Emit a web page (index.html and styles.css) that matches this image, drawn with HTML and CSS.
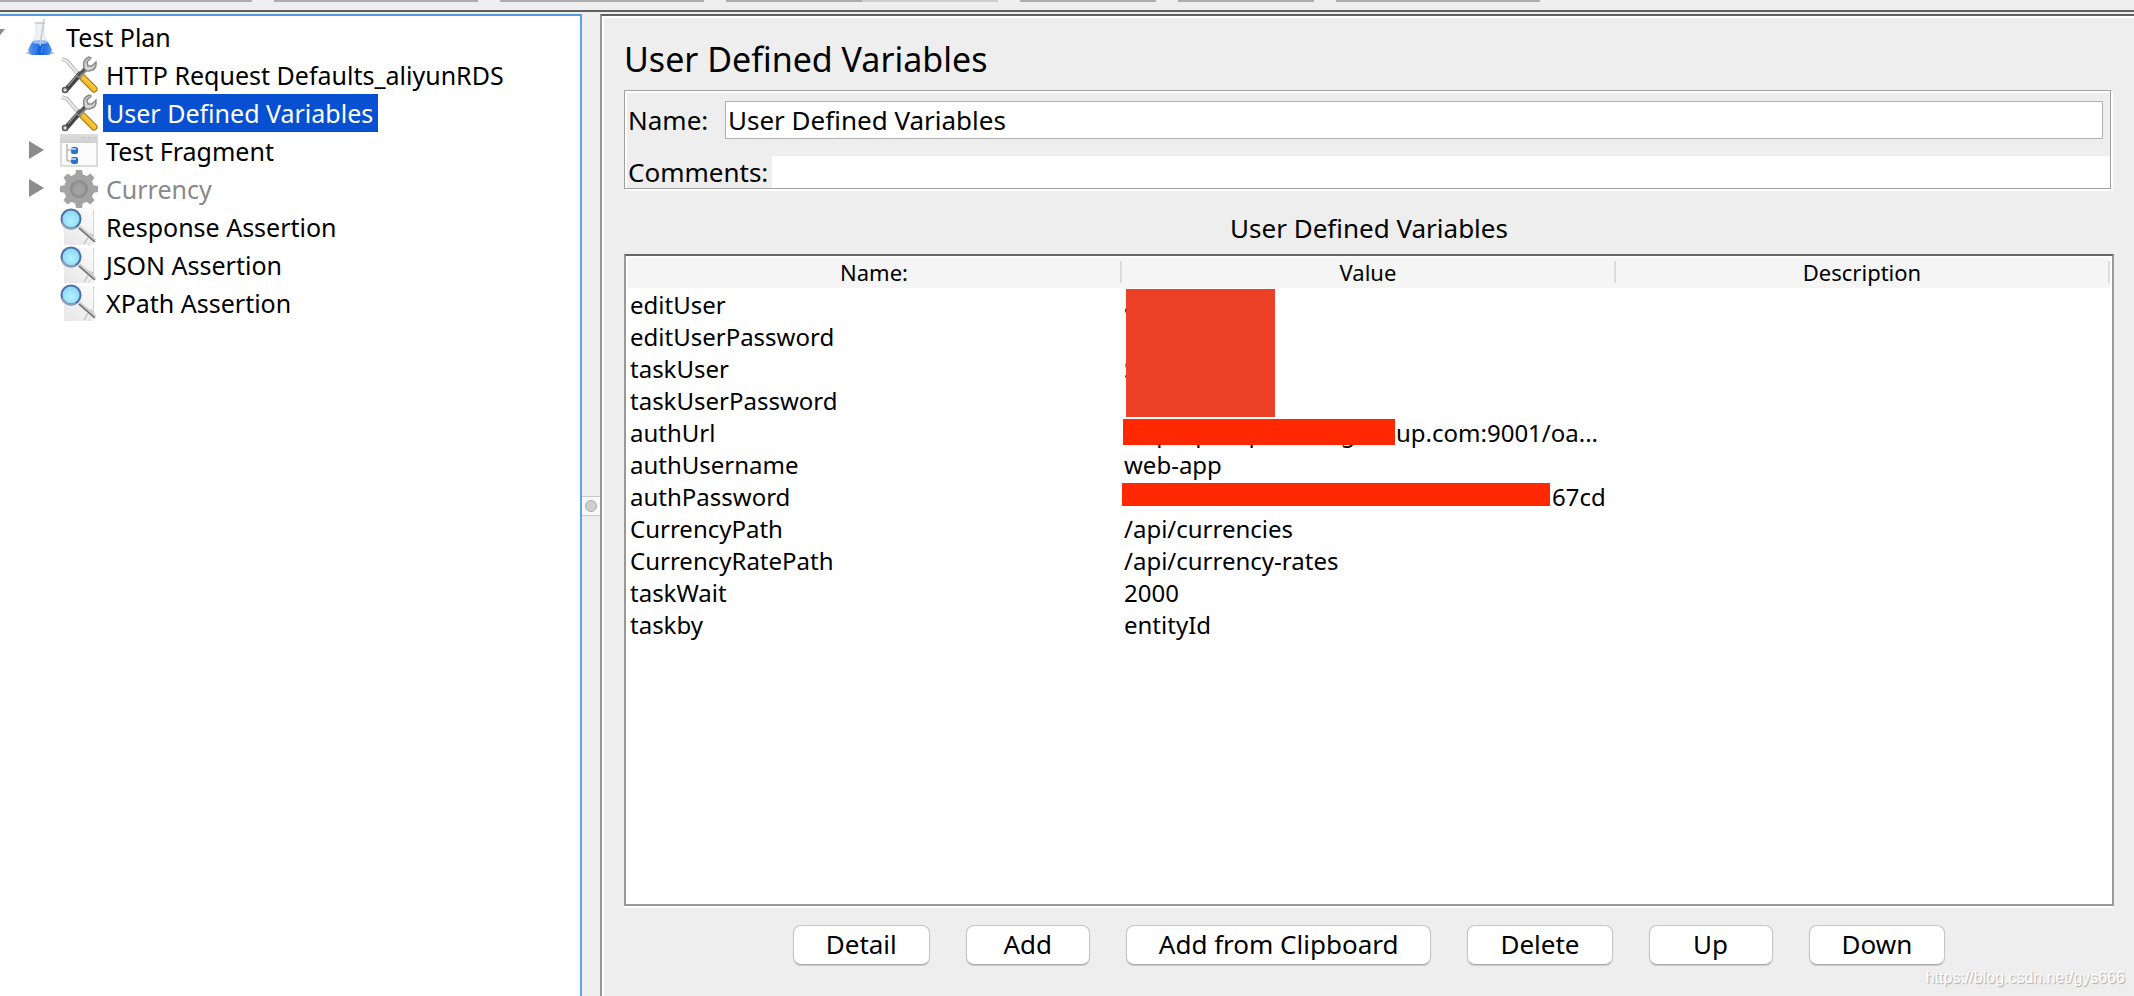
FILE: index.html
```html
<!DOCTYPE html>
<html lang="en">
<head>
<meta charset="utf-8">
<title>User Defined Variables</title>
<link rel="stylesheet" href="styles.css">
</head>
<body>
<svg class="defs" aria-hidden="true">
  <defs>
    <linearGradient id="gold" x1="0" y1="1" x2="1" y2="0"><stop offset="0" stop-color="#d99a12"/><stop offset=".6" stop-color="#fbc93c"/><stop offset="1" stop-color="#d08f10"/></linearGradient>
    <linearGradient id="paper" x1="0" y1="1" x2="1" y2="0"><stop offset="0" stop-color="#e6e6e6"/><stop offset="1" stop-color="#fcfcfc"/></linearGradient>
    <radialGradient id="lens" cx=".5" cy=".6" r=".6"><stop offset="0" stop-color="#b5f2fd"/><stop offset="1" stop-color="#86d3f3"/></radialGradient>
    <linearGradient id="liquid" x1="0" y1="0" x2="1" y2="0"><stop offset="0" stop-color="#5b9df0"/><stop offset=".5" stop-color="#0f5fdc"/><stop offset="1" stop-color="#4a90ee"/></linearGradient>
    <linearGradient id="bar" x1="0" y1="0" x2="0" y2="1"><stop offset="0" stop-color="#dedede"/><stop offset="1" stop-color="#cfcfcf"/></linearGradient>
    <symbol id="flask" viewBox="0 0 28 38">
      <ellipse cx="14" cy="35" rx="14" ry="2" fill="#b9b9b9"/>
      <path d="M10 5 L10 17 L3 31 Q1 36 6 36 L22 36 Q27 36 25 31 L18 17 L18 5 Z" fill="#f0f1f4" stroke="#dfe3e8"/>
      <path d="M6 24 L22 24 L25.500 31 Q26 36 22 37 L6 37 Q2 36 2.500 31 Z" fill="url(#liquid)"/>
      <ellipse cx="14" cy="24" rx="8" ry="2" fill="#8dbcf5"/>
      <path d="M18 1 L14 28" stroke="#c3c7cc" stroke-width="1.500"/>
      <path d="M9 5 H19" stroke="#c4c8ce" stroke-width="1.500"/>
      <path d="M11 28 L8 35 M17 28 L15 35" stroke="#4487e6" stroke-width="1.500"/>
    </symbol>
    <symbol id="tools" viewBox="0 0 38 38">
      <path d="M2 3 L7 5 L19 19" fill="none" stroke="#b4b4b4" stroke-width="4"/>
      <path d="M2 3 L7 5 L19 19" fill="none" stroke="#ededed" stroke-width="2"/>
      <path d="M22 21 L34 33" stroke="#a5700c" stroke-width="7" stroke-linecap="round"/>
      <path d="M22 21 L34 33" stroke="url(#gold)" stroke-width="5" stroke-linecap="round"/>
      <path d="M20 18 L6 34" stroke="#444" stroke-width="5" stroke-linecap="round"/>
      <path d="M18 18 L8 30" stroke="#8b8b8b" stroke-width="1.500"/>
      <circle cx="5" cy="34" r="2.500" fill="#ddd" stroke="#555" stroke-width="1.500"/>
      <path d="M17 20 L24 12 Q22 4 29 1 L31 2 L27 6 L28 10 L32 10 L36 6 Q37 14 29 15 L26 15 L20 22 Z" fill="#d5d5d5" stroke="#888" stroke-width="1.500"/>
      <path d="M18 20 L25 13" stroke="#555" stroke-width="3"/>
    </symbol>
    <symbol id="fragment" viewBox="0 0 38 38">
      <rect x="1" y="3" width="36" height="31" fill="#fbfbfb" stroke="#dcdcdc" stroke-width="2"/>
      <rect x="0" y="2" width="38" height="9" fill="url(#bar)"/>
      <path d="M22 6 H25 M28 6 H31 M34 6 H36" stroke="#bfbfbf"/>
      <path d="M7 12 V29 H12 M7 18 H12" fill="none" stroke="#999"/>
      <rect x="11" y="15" width="7" height="7" rx="2" fill="#2873d0"/><path d="M11 17 H16" stroke="#9dc7f1" stroke-width="2"/>
      <rect x="11" y="25" width="7" height="7" rx="2" fill="#2873d0"/><path d="M11 27 H16" stroke="#9dc7f1" stroke-width="2"/>
    </symbol>
    <symbol id="gear" viewBox="0 0 38 38">
      <g fill="#a3a3a3">
        <circle cx="19" cy="19" r="15"/>
        <path id="tooth" d="M15 6 L16 0 H22 L23 6 Z M15 32 L16 38 H22 L23 32 Z"/>
        <use href="#tooth" transform="rotate(45 19 19)"/>
        <use href="#tooth" transform="rotate(90 19 19)"/>
        <use href="#tooth" transform="rotate(135 19 19)"/>
      </g>
      <circle cx="19" cy="19" r="8" fill="#999" stroke="#8c8c8c" stroke-width="2"/>
      <circle cx="19" cy="20" r="5" fill="#a2a2a2"/>
    </symbol>
    <symbol id="magnifier" viewBox="0 0 38 38">
      <rect x="4" y="2" width="30" height="35" fill="url(#paper)"/>
      <path d="M33.500 2 V30 L28 37" fill="none" stroke="#d5d5d5"/>
      <path d="M24 36 L30 26 L34 28" fill="none" stroke="#ccc" stroke-width="2"/>
      <path d="M19 19 L35 33" stroke="#cfcfcf" stroke-width="4"/>
      <path d="M19 20 L35 34" stroke="#6c6c6c" stroke-width="1.500"/>
      <circle cx="11" cy="11" r="9.500" fill="url(#lens)" stroke="#4a6fa5" stroke-width="2"/>
      <path d="M2 14 A9.500 9.500 0 0 0 16 19" fill="none" stroke="#8fa0b5" stroke-width="2"/>
    </symbol>
  </defs>
</svg>

<div class="app">
  <div class="toolbar">
    <i class="seg seg-first"></i><i class="seg seg-wide"></i><i class="seg seg-wide"></i><i class="seg seg-progress"></i><i class="seg"></i><i class="seg"></i><i class="seg seg-wide"></i>
  </div>
  <div class="workspace">
    <nav class="tree" aria-label="Test Plan">
      <ul>
        <li>
          <div class="node root"><svg class="arrow-open" viewBox="0 0 16 10"><path d="M0 0H16L8 10Z"/></svg><svg class="icon flask"><use href="#flask"/></svg><span class="label">Test Plan</span></div>
          <ul>
            <li class="node"><svg class="icon"><use href="#tools"/></svg><span class="label">HTTP Request Defaults_aliyunRDS</span></li>
            <li class="node"><svg class="icon"><use href="#tools"/></svg><span class="label selected">User Defined Variables</span></li>
            <li class="node"><svg class="arrow" viewBox="0 0 15 18"><path d="M0 0L15 9L0 18Z"/></svg><svg class="icon"><use href="#fragment"/></svg><span class="label">Test Fragment</span></li>
            <li class="node"><svg class="arrow" viewBox="0 0 15 18"><path d="M0 0L15 9L0 18Z"/></svg><svg class="icon"><use href="#gear"/></svg><span class="label disabled">Currency</span></li>
            <li class="node"><svg class="icon"><use href="#magnifier"/></svg><span class="label">Response Assertion</span></li>
            <li class="node"><svg class="icon"><use href="#magnifier"/></svg><span class="label">JSON Assertion</span></li>
            <li class="node"><svg class="icon"><use href="#magnifier"/></svg><span class="label">XPath Assertion</span></li>
          </ul>
        </li>
      </ul>
    </nav>
    <div class="splitter"><span class="grip"><i></i></span></div>
    <main class="panel">
      <h1>User Defined Variables</h1>
      <form class="meta">
        <div class="row name-row"><label for="name">Name:</label><input id="name" type="text" value="User Defined Variables"></div>
        <div class="row comments-row"><label for="comments">Comments:</label><input id="comments" type="text"></div>
      </form>
      <h2>User Defined Variables</h2>
      <div class="table-box">
        <table>
          <thead><tr><th scope="col"><span>Name:</span></th><th scope="col"><span>Value</span></th><th scope="col"><span>Description</span></th></tr></thead>
          <tbody>
            <tr><td>editUser</td><td><span class="covered">a<i class="cover cover-block"></i></span></td><td></td></tr>
            <tr><td>editUserPassword</td><td></td><td></td></tr>
            <tr><td>taskUser</td><td>S</td><td></td></tr>
            <tr><td>taskUserPassword</td><td></td><td></td></tr>
            <tr><td>authUrl</td><td><span class="covered covered-url">http://p......p............g<i class="cover cover-url"></i></span>up.com:9001/oa...</td><td></td></tr>
            <tr><td>authUsername</td><td>web-app</td><td></td></tr>
            <tr><td>authPassword</td><td><span class="covered covered-key"><i class="cover cover-key"></i></span>67cd</td><td></td></tr>
            <tr><td>CurrencyPath</td><td>/api/currencies</td><td></td></tr>
            <tr><td>CurrencyRatePath</td><td>/api/currency-rates</td><td></td></tr>
            <tr><td>taskWait</td><td>2000</td><td></td></tr>
            <tr><td>taskby</td><td>entityId</td><td></td></tr>
          </tbody>
        </table>
      </div>
      <div class="actions">
        <button type="button">Detail</button>
        <button type="button">Add</button>
        <button type="button">Add from Clipboard</button>
        <button type="button">Delete</button>
        <button type="button">Up</button>
        <button type="button">Down</button>
      </div>
    </main>
  </div>
  <span class="watermark">https://blog.csdn.net/gys666</span>
</div>
</body>
</html>
```
FILE: styles.css
```css
* { box-sizing: border-box; }

body {
  margin: 0;
  background: #eee;
  color: #000;
  font-family: "Noto Sans", "Open Sans", sans-serif;
  font-size: 24px;
}

.defs { position: absolute; width: 0; height: 0; }

.app {
  position: relative;
  display: flex;
  flex-direction: column;
  min-height: 100vh;
}

/* Toolbar edge */
.toolbar {
  display: flex;
  gap: 22px;
  height: 12px;
  border-bottom: 2px solid #606060;
}
.seg { width: 136px; height: 2px; background: #adadad; }
.seg-first { width: 252px; }
.seg-wide { width: 204px; }
.seg-progress { width: 272px; background: linear-gradient(90deg, #adadad 50%, #cdcdcd 50%); }

.workspace { display: flex; flex: 1; padding-top: 2px; }

/* Tree */
.tree {
  width: 582px;
  flex: none;
  padding-top: 2px;
  overflow: hidden;
  background: #fff;
  border-top: 2px solid #4f9ddd;
  border-right: 2px solid #58a8e8;
  font-size: 25px;
}
.tree ul { margin: 0; padding: 0; list-style: none; }
.node {
  position: relative;
  display: flex;
  align-items: center;
  gap: 5px;
  height: 38px;
  padding-left: 60px;
}
.root { padding-left: 26px; gap: 9px; }
.icon { width: 38px; height: 38px; flex: none; }
.flask { width: 28px; }
.label { padding: 0 5px 0 3px; line-height: 38px; white-space: nowrap; }
.selected { background: #0850d2; color: #fff; }
.disabled { color: #888; }
.arrow, .arrow-open { position: absolute; fill: #8c8c8c; }
.arrow { left: 29px; top: 9px; width: 15px; height: 18px; }
.arrow-open { left: -11px; top: 11px; width: 16px; height: 10px; }

/* Splitter */
.splitter { display: flex; align-items: center; width: 18px; flex: none; padding-top: 2px; }
.grip {
  display: flex;
  align-items: center;
  justify-content: center;
  width: 18px;
  height: 20px;
  background: #fafafa;
  border: solid #c8c8c8;
  border-width: 1px 0;
}
.grip i {
  width: 12px;
  height: 12px;
  border: 1px solid #aaa;
  border-radius: 50%;
  background: #cfcfcf;
}

/* Editor */
.panel {
  display: flex;
  flex: 1;
  flex-direction: column;
  min-width: 0;
  padding: 2px 20px 31px 22px;
  border-top: 2px solid #606060;
  border-left: 2px solid #999;
  box-shadow: inset 2px 2px #fff;
}
h1, h2 { margin: 0; font-weight: 400; }
h1 { padding-top: 10px; font-size: 34px; line-height: 62px; }
h2 { padding-top: 11px; font-size: 26px; line-height: 52px; text-align: center; }

.meta {
  margin: 0 3px 2px 0;
  padding-top: 10px;
  border: 1px solid #a0a0a0;
  box-shadow: inset 2px 2px #fff, 2px 2px #fff;
  font-size: 26px;
}
.row { display: flex; align-items: center; padding-left: 3px; }
.name-row { padding-right: 7px; }
.name-row label { width: 97px; }
.comments-row { padding-top: 17px; }
.meta label { flex: none; line-height: 32px; }
.comments-row label { width: 144px; }
.meta input {
  flex: 1;
  min-width: 0;
  height: 32px;
  padding: 0 2px;
  border: 0;
  background: #fff;
  color: inherit;
  font: inherit;
  outline: 0;
}
.meta .name-row input { height: 38px; border: 1px solid #b0b0b0; }

.table-box {
  flex: 1;
  padding: 2px 2px 0;
  background: #fff;
  border: 2px solid #999;
  border-top-color: #666;
  box-shadow: 0 2px #fff;
}
table { width: 100%; table-layout: fixed; border-collapse: collapse; }
th {
  height: 30px;
  padding: 0 0 2px;
  background: #f5f5f5;
  font-size: 22px;
  font-weight: 400;
  line-height: 22px;
}
th span { display: block; border-right: 2px solid #dcdcdc; }
td { height: 32px; padding: 2px 0 0 2px; line-height: 30px; white-space: nowrap; }

/* Painted-over values */
.covered { position: relative; display: inline-block; height: 30px; vertical-align: top; }
.covered-url { width: 272px; }
.covered-key { width: 428px; }
.cover { position: absolute; z-index: 1; background: #ff2800; }
.cover-block { left: 2px; top: -1px; width: 149px; height: 128px; background: #ec4126; }
.cover-url { left: -1px; top: 1px; width: 272px; height: 26px; }
.cover-key { left: -2px; top: 1px; width: 428px; height: 23px; }

/* Buttons */
.actions { display: flex; justify-content: center; gap: 36px; padding-top: 19px; }
button {
  min-width: 124px;
  height: 40px;
  padding: 0 32px 2px;
  border: 1px solid #c6c6c6;
  border-bottom-color: #a8a8a8;
  border-radius: 8px;
  background: #fff;
  box-shadow: 0 1px 1px #ccc;
  color: #000;
  font: inherit;
  font-size: 26px;
  line-height: 36px;
}

.watermark {
  position: absolute;
  right: 9px;
  bottom: 6px;
  color: #fff;
  font: 16px/24px "Liberation Sans", Arial, sans-serif;
  text-shadow: 1px 1px 1px #aaa;
}
```
